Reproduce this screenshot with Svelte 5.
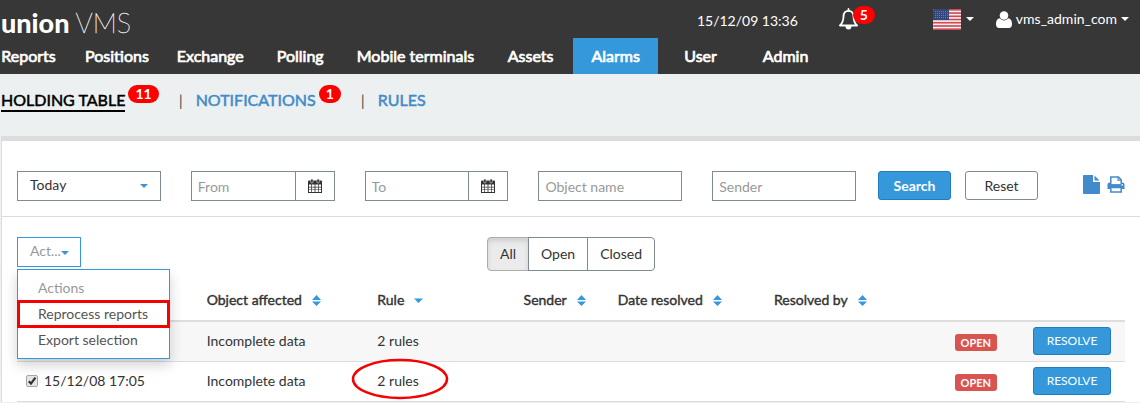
<script>
  const menu = [
    { label: 'Reports' },
    { label: 'Positions' },
    { label: 'Exchange' },
    { label: 'Polling' },
    { label: 'Mobile terminals' },
    { label: 'Assets' },
    { label: 'Alarms', active: true },
    { label: 'User' },
    { label: 'Admin' }
  ];
  const tabs = [
    { label: 'HOLDING TABLE', count: 11, active: true },
    { label: 'NOTIFICATIONS', count: 1 },
    { label: 'RULES' }
  ];
  const columns = [
    { label: 'Object affected', sort: 'both' },
    { label: 'Rule', sort: 'down' },
    { label: 'Sender', sort: 'both' },
    { label: 'Date resolved', sort: 'both' },
    { label: 'Resolved by', sort: 'both' }
  ];
  const rows = [
    { object: 'Incomplete data', rule: '2 rules', status: 'OPEN' },
    { date: '15/12/08 17:05', object: 'Incomplete data', rule: '2 rules', status: 'OPEN', marked: true }
  ];
  const states = ['All', 'Open', 'Closed'];
  let state = $state('All');
  let checked = $state(true);
</script>

{#snippet caret()}
  <svg class="caret" width="8" height="4" viewBox="0 0 8 4" aria-hidden="true"><path d="M0 0h8L4 4z" fill="currentColor" /></svg>
{/snippet}

{#snippet calendar()}
  <svg width="14" height="14" viewBox="0 0 14 14" aria-hidden="true">
    <path d="M1 1.500h12a1 1 0 0 1 1 1V14H0V2.500a1 1 0 0 1 1-1z" fill="#333" />
    <path d="M1 5.500h2.300v2.200H1zM4 5.500h2.600v2.200H4zM7.400 5.500H10v2.200H7.400zM10.700 5.500H13v2.200h-2.300zM1 8.400h2.300v2H1zM4 8.400h2.600v2H4zM7.400 8.400H10v2H7.400zM10.700 8.400H13v2h-2.300zM1 11.100h2.300V13H1zM4 11.100h2.600V13H4zM7.400 11.100H10V13H7.400zM10.700 11.100H13V13h-2.300z" fill="#fff" />
    <rect x="2.700" y="0" width="2.400" height="4" rx="1.100" fill="#333" stroke="#fff" stroke-width=".5" />
    <rect x="8.900" y="0" width="2.400" height="4" rx="1.100" fill="#333" stroke="#fff" stroke-width=".5" />
  </svg>
{/snippet}

<header>
  <div class="top">
    <a class="logo" href="#home"><b>union</b><span>VMS</span></a>
    <div class="status">
      <span class="clock">15/12/09 13:36</span>
      <button class="bell" aria-label="Alarms">
        <svg width="20" height="22" viewBox="0 0 20 22" fill="none" stroke="#fff" stroke-width="1.800" aria-hidden="true">
          <path d="M10 2.800C6.500 2.800 5 5.500 5 8.500c0 4.500-1.200 6.800-3.600 9h17.200c-2.400-2.200-3.600-4.500-3.600-9 0-3-1.500-5.700-5-5.700z" transform="translate(-.5 0)" stroke-linejoin="round" />
          <path d="M9.500 2.800V1" stroke-linecap="round" />
          <path d="M6.500 18h6a3 3.500 0 0 1-6 0z" fill="#fff" stroke="none" />
        </svg>
        <span class="badge">5</span>
      </button>
      <button class="lang" aria-label="Language">
        <svg width="28" height="21" viewBox="0 0 28 21" aria-hidden="true">
          <defs>
            <clipPath id="flag"><rect width="28" height="21" rx="2" /></clipPath>
            <pattern id="stars" width="2" height="2" patternUnits="userSpaceOnUse"><rect width="1" height="1" fill="#6c7da3" /></pattern>
          </defs>
          <g clip-path="url(#flag)">
            <rect width="28" height="21" fill="#f7f0f0" />
            {#each [0, 1, 2, 3, 4, 5, 6] as i}
              <rect y={i * 3.23} width="28" height="1.620" fill="#cc4a55" />
            {/each}
            <rect width="16" height="11" fill="#34477a" />
            <rect x="1" y="1" width="14" height="9" fill="url(#stars)" />
          </g>
        </svg>
        {@render caret()}
      </button>
      <button class="account">
        <svg width="16" height="17" viewBox="0 0 16 17" fill="#fff" aria-hidden="true">
          <circle cx="8" cy="4.500" r="4.300" />
          <path d="M4 7.200C1.200 7.500 0 9.800 0 13c0 2.500 1.200 4 3 4h10c1.800 0 3-1.500 3-4 0-3.200-1.200-5.500-4-5.800C11 8.500 9.600 9.400 8 9.400S5 8.500 4 7.200z" />
        </svg>
        <span>vms_admin_com</span>
        {@render caret()}
      </button>
    </div>
  </div>
  <nav class="menu">
    {#each menu as item}
      <a href="#{item.label}" class:active={item.active}>{item.label}</a>
    {/each}
  </nav>
</header>

<nav class="tabs">
  {#each tabs as tab, i}
    {#if i > 0}<span class="bar">|</span>{/if}
    <span class="tab">
      <a href="#{tab.label}" class:active={tab.active}>{tab.label}</a>
      {#if tab.count}<span class="badge">{tab.count}</span>{/if}
    </span>
  {/each}
</nav>

<main>
  <form class="search">
    <div class="fields">
      <div class="pick">
        <select aria-label="Period"><option>Today</option></select>
        {@render caret()}
      </div>
      <div class="date">
        <input type="text" placeholder="From" aria-label="From" />
        <button type="button" aria-label="Choose start date">{@render calendar()}</button>
      </div>
      <div class="date">
        <input type="text" placeholder="To" aria-label="To" />
        <button type="button" aria-label="Choose end date">{@render calendar()}</button>
      </div>
      <input type="text" placeholder="Object name" aria-label="Object name" />
      <input type="text" placeholder="Sender" aria-label="Sender" />
    </div>
    <div class="buttons">
      <button type="button" class="btn primary">Search</button>
      <button type="button" class="btn">Reset</button>
    </div>
    <div class="tools">
      <button type="button" aria-label="Export file">
        <svg width="17" height="19" viewBox="0 0 17 19" fill="#428bca" aria-hidden="true"><path d="M1 0h9v7h7v11a1 1 0 0 1-1 1H1a1 1 0 0 1-1-1V1a1 1 0 0 1 1-1zM11.500 .5L16.500 5.500h-5z" /></svg>
      </button>
      <button type="button" aria-label="Print">
        <svg width="18" height="17" viewBox="0 0 18 17" aria-hidden="true">
          <path d="M2.500 6.500h13a2 2 0 0 1 2 2V13h-17V8.500a2 2 0 0 1 2-2z" fill="#428bca" />
          <path d="M3.800 9V1h7.700l2.700 2.700V9z" fill="#fff" stroke="#428bca" stroke-width="1.500" />
          <path d="M11 1v3.200h3.200" fill="none" stroke="#428bca" stroke-width="1.200" />
          <path d="M3 8.300h12v2.700H3z" fill="#428bca" />
          <path d="M3.800 11.500h10.400V16H3.800z" fill="#fff" stroke="#428bca" stroke-width="1.500" />
          <rect x="14.500" y="8.200" width="1.400" height="1.400" fill="#fff" />
        </svg>
      </button>
    </div>
  </form>

  <section class="list">
    <div class="controls">
      <div class="actions">
        <button class="toggle" aria-expanded="true"><span>Act...</span>{@render caret()}</button>
        <ul class="drop">
          <li class="title">Actions</li>
          <li><button class="marked">Reprocess reports</button></li>
          <li><button>Export selection</button></li>
        </ul>
      </div>
      <div class="group">
        {#each states as name}
          <button class:on={state === name} onclick={() => (state = name)}>{name}</button>
        {/each}
      </div>
    </div>

    <table>
      <colgroup>
        <col class="c-date" /><col class="c-object" /><col class="c-rule" /><col class="c-sender" />
        <col class="c-resolved" /><col class="c-by" /><col class="c-status" /><col class="c-action" />
      </colgroup>
      <thead>
        <tr>
          <td></td>
          {#each columns as column}
            <th scope="col">
              <span class="head">
                {column.label}
                <svg width="9" height="11" viewBox="0 0 9 11" fill="#3498db" aria-hidden="true">
                  {#if column.sort === 'both'}
                    <path d="M4.500 0L9 5H0zM0 6.500h9L4.500 11z" />
                  {:else}
                    <path d="M0 3.500h9L4.500 8z" />
                  {/if}
                </svg>
              </span>
            </th>
          {/each}
          <td></td>
          <td></td>
        </tr>
      </thead>
      <tbody>
        {#each rows as row}
          <tr>
            <td>
              {#if row.date}
                <label class="check">
                  <span class="box">
                    <input type="checkbox" bind:checked />
                    {#if checked}
                      <svg width="12" height="12" viewBox="0 0 12 12" fill="none" stroke="#333" stroke-width="2.200" aria-hidden="true"><path d="M2.800 6.200L5 8.600l4.400-6" /></svg>
                    {/if}
                  </span>
                  {row.date}
                </label>
              {/if}
            </td>
            <td>{row.object}</td>
            <td>
              <span class="rule">
                {row.rule}
                {#if row.marked}
                  <svg class="ring" width="98" height="42" viewBox="0 0 98 42" fill="none" stroke="#f60000" stroke-width="2.500" aria-hidden="true"><ellipse cx="49" cy="21" rx="47" ry="19" /></svg>
                {/if}
              </span>
            </td>
            <td></td>
            <td></td>
            <td></td>
            <td><span class="label">{row.status}</span></td>
            <td><button class="btn primary small">RESOLVE</button></td>
          </tr>
        {/each}
      </tbody>
    </table>
  </section>
</main>

<style>
  :global(body) {
    margin: 0;
    background: #ecf0f1;
    overflow: hidden;
  }
  :global(#app) {
    font: 14px/20px Lato, sans-serif;
    color: #333;
  }
  button, input, select {
    font: inherit;
    color: inherit;
    margin: 0;
    box-sizing: border-box;
  }
  button {
    background: none;
    border: 0;
    padding: 0;
    cursor: pointer;
  }
  svg {
    display: block;
    flex: none;
  }
  a {
    text-decoration: none;
  }

  header {
    background: #373737;
    color: #fff;
  }
  .top {
    display: flex;
    justify-content: space-between;
    height: 38px;
    padding: 0 11px 0 1px;
  }
  .logo {
    display: flex;
    gap: 6px;
    color: #fff;
    font-size: 27px;
    line-height: 46px;
  }
  .logo b {
    font-weight: 900;
  }
  .logo span {
    font-weight: 100;
    -webkit-text-stroke: 0.3px;
  }
  .status {
    display: flex;
    align-items: center;
  }
  .clock {
    padding-top: 4px;
  }
  .bell {
    position: relative;
    margin-left: 41px;
  }
  .badge {
    background: #f00;
    color: #fff;
    border-radius: 9px;
    padding: 0 7px;
    font-size: 14px;
    font-weight: 700;
    line-height: 18px;
  }
  .bell .badge {
    position: absolute;
    left: 14px;
    top: -2px;
  }
  .lang, .account {
    display: flex;
    align-items: center;
  }
  .lang {
    gap: 5px;
    margin-left: 74px;
  }
  .account {
    gap: 4px;
    margin-left: 22px;
  }
  .menu {
    display: flex;
    margin-left: -14px;
  }
  .menu a {
    box-sizing: border-box;
    min-width: 85px;
    padding: 0 14px;
    color: #fff;
    font-size: 16px;
    line-height: 36px;
    text-align: center;
    white-space: nowrap;
    -webkit-text-stroke: 0.7px;
  }
  .menu .active {
    background: #3498db;
  }

  .tabs {
    display: flex;
    align-items: flex-start;
    box-sizing: border-box;
    height: 62px;
    padding: 11px 0 0 1px;
    font-size: 16px;
  }
  .tab {
    display: flex;
    align-items: flex-start;
    gap: 3px;
  }
  .tab a {
    margin-top: 5px;
    color: #428bca;
    -webkit-text-stroke: 0.5px;
  }
  .tab .active {
    color: #000;
    border-bottom: 2px solid #000;
  }
  .bar {
    margin: 5px 13px 0 20px;
    color: #555;
  }

  main {
    margin-left: 1px;
    background: #fff;
    border-top: 5px solid #dcdcdc;
    border-left: 1px solid #dcdcdc;
  }
  .search {
    display: flex;
    align-items: flex-start;
    padding: 30px 15px 15px;
    border-bottom: 1px solid #dcdcdc;
  }
  .fields {
    flex: 1;
    display: grid;
    grid-template-columns: repeat(5, minmax(0, 1fr));
    gap: 30px;
  }
  .fields input, .fields select {
    width: 100%;
    min-width: 0;
    height: 30px;
    padding: 0 6px;
    background: #fff;
    border: 1px solid #7f8c8d;
    border-radius: 0;
    outline: 0;
  }
  .fields input::placeholder {
    color: #999;
    opacity: 1;
  }
  .pick {
    display: grid;
    align-items: center;
  }
  .pick select, .pick .caret {
    grid-area: 1 / 1;
  }
  .pick select {
    appearance: none;
    padding: 0 12px 2px;
  }
  .pick .caret {
    justify-self: end;
    margin-right: 13px;
    color: #3498db;
    pointer-events: none;
  }
  .date {
    display: flex;
  }
  .date button {
    display: grid;
    place-items: center;
    flex: none;
    width: 39px;
    border: 1px solid #7f8c8d;
    border-left: 0;
  }
  .buttons {
    display: flex;
    gap: 14px;
    margin-left: 22px;
  }
  .btn {
    width: 73px;
    height: 29px;
    background: #fff;
    border: 1px solid #7f8c8d;
    border-radius: 3px;
  }
  .primary {
    background: #3498db;
    border-color: #217dbb;
    color: #fff;
  }
  .buttons .primary {
    font-weight: 700;
  }
  .tools {
    display: flex;
    align-items: center;
    gap: 7px;
    margin: 4px 0 0 45px;
  }

  .list {
    padding: 20px 15px 0;
  }
  .controls {
    display: grid;
    grid-template-columns: 1fr auto 1fr;
    align-items: start;
    height: 43px;
  }
  .actions {
    position: relative;
  }
  .toggle {
    display: flex;
    align-items: center;
    width: 64px;
    height: 30px;
    padding: 0 12px 2px;
    border: 1px solid #3498db;
    color: #3498db;
  }
  .toggle span {
    color: #999;
  }
  .toggle .caret {
    margin-top: 4px;
  }
  .drop {
    position: absolute;
    z-index: 2;
    left: 0;
    top: 32px;
    box-sizing: border-box;
    width: 153px;
    height: 90px;
    margin: 0;
    padding: 5px 0;
    list-style: none;
    background: #fff;
    border: 1px solid #3498db;
    box-shadow: 0 6px 12px rgba(0, 0, 0, 0.18);
    line-height: 26px;
    color: #555;
  }
  .drop .title {
    padding: 0 20px;
    color: #999;
  }
  .drop button {
    display: block;
    width: 100%;
    height: 26px;
    padding: 0 20px;
    text-align: left;
    white-space: nowrap;
  }
  .drop .marked {
    outline: 3px solid #f60000;
    outline-offset: -2px;
  }
  .group {
    display: flex;
  }
  .group button {
    height: 34px;
    padding: 0 12px;
    background: #fff;
    border: 1px solid #7f8c8d;
    margin-left: -1px;
  }
  .group button:first-child {
    border-radius: 4px 0 0 4px;
    margin-left: 0;
  }
  .group button:last-child {
    border-radius: 0 4px 4px 0;
  }
  .group .on {
    background: #ebebeb;
    border-color: #adadad;
    box-shadow: inset 0 3px 5px rgba(0, 0, 0, 0.125);
  }

  table {
    width: 100%;
    table-layout: fixed;
    border-collapse: separate;
    border-spacing: 0;
  }
  .c-date { width: 16.4%; }
  .c-object { width: 15.4%; }
  .c-rule { width: 13.2%; }
  .c-sender { width: 8.5%; }
  .c-resolved { width: 14.1%; }
  .c-by { width: 16.3%; }
  .c-status { width: 7%; }
  th, td {
    padding: 0 8px;
    text-align: left;
    white-space: nowrap;
  }
  thead th, thead td {
    height: 40px;
    border-bottom: 2px solid #ddd;
    font-weight: 400;
    -webkit-text-stroke: 0.4px;
  }
  tbody td {
    height: 37px;
    padding-bottom: 2px;
    border-bottom: 1px solid #ddd;
  }
  tbody tr:nth-child(odd) {
    background: #f7f7f7;
  }
  .head {
    display: flex;
    align-items: center;
    gap: 10px;
  }
  .check {
    display: flex;
    align-items: center;
    gap: 6px;
    padding-left: 1px;
  }
  .box {
    display: grid;
  }
  .box input, .box svg {
    grid-area: 1 / 1;
  }
  .box svg {
    pointer-events: none;
  }
  .box input {
    appearance: none;
    width: 12px;
    height: 12px;
    border: 1px solid #a6a6a6;
    border-radius: 2px;
    background: #e6e6e6;
  }
  .rule {
    position: relative;
  }
  .ring {
    position: absolute;
    left: -26px;
    top: -14px;
    pointer-events: none;
  }
  .label {
    display: inline-block;
    margin-top: 2px;
    padding: 0 6px;
    background: #d9534f;
    border-radius: 3px;
    color: #fff;
    font-size: 11px;
    font-weight: 700;
    line-height: 17px;
    vertical-align: middle;
  }
  .small {
    display: block;
    width: 78px;
    height: 28px;
    margin-left: auto;
    margin-right: 6px;
    font-size: 12px;
  }
</style>
